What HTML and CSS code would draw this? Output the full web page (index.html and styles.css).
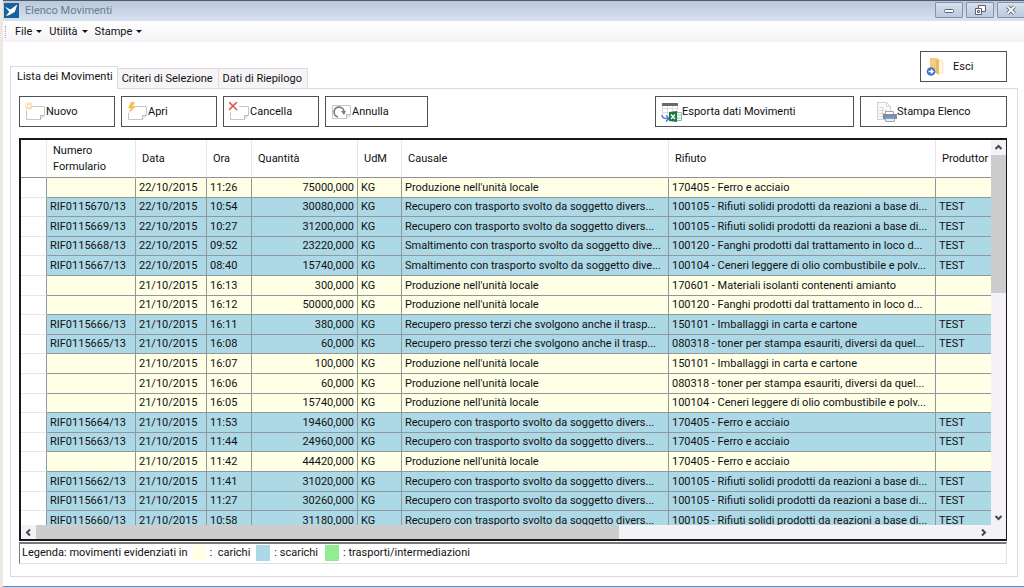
FILE: index.html
```html
<!DOCTYPE html>
<html lang="it">
<head>
<meta charset="utf-8">
<title>Elenco Movimenti</title>
<link rel="stylesheet" href="styles.css">
</head>
<body>
<div class="window">
  <header class="titlebar">
    <svg class="app-icon" viewBox="0 0 14 14" aria-hidden="true"><rect width="14" height="14" fill="#17619f"/><path d="M1 3.5 6 6 12.5 1.5 10 8.5 4.5 11.5 1.5 12 5 8.5Z" fill="#fff"/></svg>
    <h1 class="title">Elenco Movimenti</h1>
    <div class="win-buttons">
      <button class="win-button" type="button" aria-label="Riduci a icona"><svg viewBox="0 0 12 10"><rect x="1.5" y="4.5" width="9" height="3" rx="1" fill="#fff" stroke="#596373"/></svg></button>
      <button class="win-button" type="button" aria-label="Ripristina"><svg viewBox="0 0 12 10"><path d="M4.5.5h7v6h-7z" fill="#fff" stroke="#596373"/><path d="M1.5 3.500h6v6h-6z" fill="#fff" stroke="#596373"/><path d="M3.500 5.500h2v2h-2z" fill="#d5deea" stroke="#596373"/></svg></button>
      <button class="win-button" type="button" aria-label="Chiudi"><svg viewBox="0 0 12 10"><path d="m2.500 1.500 7 7m0-7-7 7" stroke="#596373" stroke-width="3.800"/><path d="m2.500 1.500 7 7m0-7-7 7" stroke="#fff" stroke-width="1.800"/></svg></button>
    </div>
  </header>
  <nav class="menubar">
    <span class="grip"></span>
    <button class="menu" type="button">File</button>
    <button class="menu" type="button">Utilità</button>
    <button class="menu" type="button">Stampe</button>
  </nav>
  <main class="content">
    <div class="top">
      <div class="tabs" role="tablist">
        <button class="tab active" type="button" role="tab" aria-selected="true">Lista dei Movimenti</button>
        <button class="tab" type="button" role="tab" aria-selected="false">Criteri di Selezione</button>
        <button class="tab" type="button" role="tab" aria-selected="false">Dati di Riepilogo</button>
      </div>
      <button class="action exit" type="button">
        <svg class="icon" viewBox="0 0 21 20"><path d="M11 3h5l1 3v10h-6" fill="#fff8e8" stroke="#f7e3bb"/><path d="M4 1h7l2 2v15l-3-2H4z" fill="#f6cb7c"/><path d="m10 4 3-2v16l-3-2z" fill="#ebbb66"/><circle cx="5" cy="14.500" r="4.300" fill="#3d73ce"/><path d="M2.500 14.500h4.500M5 12.500l2 2-2 2" fill="none" stroke="#fff" stroke-width="1.300"/></svg>
        Esci</button>
    </div>
    <section class="panel" role="tabpanel">
      <div class="toolbar">
        <button class="action narrow" type="button">
          <svg class="icon" viewBox="0 0 21 20"><path d="M5 4.500h14.500v9l-4 4h-14V8" fill="none" stroke="#c6c6c6"/><path d="M15.500 17.500v-4h4" fill="#eee" stroke="#bbb"/><path d="M4 0v8M0 4h8M1 1l6 6m0-6L1 7" stroke="#f8d597" stroke-width="1.200"/><circle cx="4" cy="4" r="1.500" fill="#fff"/></svg>Nuovo</button>
        <button class="action narrow" type="button">
          <svg class="icon" viewBox="0 0 21 20"><path d="M7 4.500h12.500v9l-4 4h-14V11" fill="none" stroke="#c6c6c6"/><path d="M15.500 17.500v-4h4" fill="#eee" stroke="#bbb"/><path d="M4 0h4L6 4h3L2 11l1.500-5H1z" fill="#f4bf59"/></svg>Apri</button>
        <button class="action narrow" type="button">
          <svg class="icon" viewBox="0 0 21 20"><path d="M10 4.500h9.500v9l-4 4h-14V10" fill="none" stroke="#c6c6c6"/><path d="M15.500 17.500v-4h4" fill="#eee" stroke="#bbb"/><path d="m0 0 8 8M8 0 0 8" stroke="#e0564a" stroke-width="1.600"/></svg>Cancella</button>
        <button class="action medium" type="button">
          <svg class="icon" viewBox="0 0 21 20"><path d="M1.500 3.500h18v10l-4 3h-14z" fill="none" stroke="#c6c6c6"/><path d="M15.500 16.500v-4h4" fill="#eee" stroke="#bbb"/><path d="M7 15a5 5 0 1 1 6-5" fill="none" stroke="#7c7c7c" stroke-width="1.700"/><path d="m10 9 5 0-2 4z" fill="#7c7c7c"/></svg>Annulla</button>
        <button class="action wide" type="button">
          <svg class="icon" viewBox="0 0 21 20"><path d="M1.500 1.500h15v15h-15zM1 6.500h15M1 10.500h15M6.500 3v13M11.500 3v13" fill="#fff" stroke="#dcdcdc"/><path d="M1 1h16v3H1z" fill="#68696b"/><path d="M0 13h8v6H0z" fill="#fff"/><path d="M1 13q0 4 6 3.500M5 13.500l3 3-3 3" fill="none" stroke="#4d79cf" stroke-width="1.500"/><path d="M15 10.500h5.500v8H15z" fill="#fff" stroke="#8cc4a6"/><path d="M16 13h4m-4 3h4" stroke="#8cc4a6"/><path d="m8 10 8-1v11l-8-1z" fill="#1d7545"/><path d="m10 12.500 4 4.500m0-4.500L10 17" stroke="#fff" stroke-width="1.300"/></svg>Esporta dati Movimenti</button>
        <button class="action print" type="button">
          <svg class="icon" viewBox="0 0 21 20"><path d="M1.500.5h9l4 4v13h-13z" fill="#fafafa" stroke="#d0d0d0"/><path d="M10.500.5v4h4M3 5.500h5M3 8.500h8M3 11.500h6M3 14.500h5M6.500 5v10" fill="none" stroke="#dadada"/><path d="M9.500 9.500h8v4h-8z" fill="#fff" stroke="#a5a5a5"/><path d="M7 12h14v5H7z" fill="#858b95"/><path d="M9 14h10v2H9z" fill="#6a98ce"/><path d="M9.500 16.500h9v3h-9z" fill="#e6edf6" stroke="#96a4b5"/></svg>Stampa Elenco</button>
      </div>
      <div class="grid">
        <div class="viewport">
          <table class="movements">
            <colgroup><col class="c-head"><col class="c-num"><col class="c-date"><col class="c-time"><col class="c-qty"><col class="c-unit"><col class="c-text"><col class="c-text"><col class="c-prod"></colgroup>
            <thead><tr><th></th><th>Numero Formulario</th><th>Data</th><th>Ora</th><th>Quantità</th><th>UdM</th><th>Causale</th><th>Rifiuto</th><th>Produttor</th></tr></thead>
            <tbody>
              <tr class="in"><td></td><td></td><td>22/10/2015</td><td>11:26</td><td>75000,000</td><td>KG</td><td>Produzione nell'unità locale</td><td>170405 - Ferro e acciaio</td><td></td></tr>
              <tr class="out"><td></td><td>RIF0115670/13</td><td>22/10/2015</td><td>10:54</td><td>30080,000</td><td>KG</td><td>Recupero con trasporto svolto da soggetto divers...</td><td>100105 - Rifiuti solidi prodotti da reazioni a base di...</td><td>TEST</td></tr>
              <tr class="out"><td></td><td>RIF0115669/13</td><td>22/10/2015</td><td>10:27</td><td>31200,000</td><td>KG</td><td>Recupero con trasporto svolto da soggetto divers...</td><td>100105 - Rifiuti solidi prodotti da reazioni a base di...</td><td>TEST</td></tr>
              <tr class="out"><td></td><td>RIF0115668/13</td><td>22/10/2015</td><td>09:52</td><td>23220,000</td><td>KG</td><td>Smaltimento con trasporto svolto da soggetto dive...</td><td>100120 - Fanghi prodotti dal trattamento in loco d...</td><td>TEST</td></tr>
              <tr class="out"><td></td><td>RIF0115667/13</td><td>22/10/2015</td><td>08:40</td><td>15740,000</td><td>KG</td><td>Smaltimento con trasporto svolto da soggetto dive...</td><td>100104 - Ceneri leggere di olio combustibile e polv...</td><td>TEST</td></tr>
              <tr class="in"><td></td><td></td><td>21/10/2015</td><td>16:13</td><td>300,000</td><td>KG</td><td>Produzione nell'unità locale</td><td>170601 - Materiali isolanti contenenti amianto</td><td></td></tr>
              <tr class="in"><td></td><td></td><td>21/10/2015</td><td>16:12</td><td>50000,000</td><td>KG</td><td>Produzione nell'unità locale</td><td>100120 - Fanghi prodotti dal trattamento in loco d...</td><td></td></tr>
              <tr class="out"><td></td><td>RIF0115666/13</td><td>21/10/2015</td><td>16:11</td><td>380,000</td><td>KG</td><td>Recupero presso terzi che svolgono anche il trasp...</td><td>150101 - Imballaggi in carta e cartone</td><td>TEST</td></tr>
              <tr class="out"><td></td><td>RIF0115665/13</td><td>21/10/2015</td><td>16:08</td><td>60,000</td><td>KG</td><td>Recupero presso terzi che svolgono anche il trasp...</td><td>080318 - toner per stampa esauriti, diversi da quel...</td><td>TEST</td></tr>
              <tr class="in"><td></td><td></td><td>21/10/2015</td><td>16:07</td><td>100,000</td><td>KG</td><td>Produzione nell'unità locale</td><td>150101 - Imballaggi in carta e cartone</td><td></td></tr>
              <tr class="in"><td></td><td></td><td>21/10/2015</td><td>16:06</td><td>60,000</td><td>KG</td><td>Produzione nell'unità locale</td><td>080318 - toner per stampa esauriti, diversi da quel...</td><td></td></tr>
              <tr class="in"><td></td><td></td><td>21/10/2015</td><td>16:05</td><td>15740,000</td><td>KG</td><td>Produzione nell'unità locale</td><td>100104 - Ceneri leggere di olio combustibile e polv...</td><td></td></tr>
              <tr class="out"><td></td><td>RIF0115664/13</td><td>21/10/2015</td><td>11:53</td><td>19460,000</td><td>KG</td><td>Recupero con trasporto svolto da soggetto divers...</td><td>170405 - Ferro e acciaio</td><td>TEST</td></tr>
              <tr class="out"><td></td><td>RIF0115663/13</td><td>21/10/2015</td><td>11:44</td><td>24960,000</td><td>KG</td><td>Recupero con trasporto svolto da soggetto divers...</td><td>170405 - Ferro e acciaio</td><td>TEST</td></tr>
              <tr class="in"><td></td><td></td><td>21/10/2015</td><td>11:42</td><td>44420,000</td><td>KG</td><td>Produzione nell'unità locale</td><td>170405 - Ferro e acciaio</td><td></td></tr>
              <tr class="out"><td></td><td>RIF0115662/13</td><td>21/10/2015</td><td>11:41</td><td>31020,000</td><td>KG</td><td>Recupero con trasporto svolto da soggetto divers...</td><td>100105 - Rifiuti solidi prodotti da reazioni a base di...</td><td>TEST</td></tr>
              <tr class="out"><td></td><td>RIF0115661/13</td><td>21/10/2015</td><td>11:27</td><td>30260,000</td><td>KG</td><td>Recupero con trasporto svolto da soggetto divers...</td><td>100105 - Rifiuti solidi prodotti da reazioni a base di...</td><td>TEST</td></tr>
              <tr class="out"><td></td><td>RIF0115660/13</td><td>21/10/2015</td><td>10:58</td><td>31180,000</td><td>KG</td><td>Recupero con trasporto svolto da soggetto divers...</td><td>100105 - Rifiuti solidi prodotti da reazioni a base di...</td><td>TEST</td></tr>
            </tbody>
          </table>
        </div>
        <div class="vscroll">
          <svg class="arrow" viewBox="0 0 9 9"><path d="m1.500 6 3-3 3 3"/></svg>
          <div class="track"><div class="thumb"></div></div>
          <svg class="arrow" viewBox="0 0 9 9"><path d="m1.500 3 3 3 3-3"/></svg>
        </div>
        <div class="hscroll">
          <svg class="arrow" viewBox="0 0 9 9"><path d="m6 1.500-3 3 3 3"/></svg>
          <div class="track"><div class="thumb"></div></div>
          <svg class="arrow" viewBox="0 0 9 9"><path d="m3 1.500 3 3-3 3"/></svg>
        </div>
        <div class="corner"></div>
      </div>
      <div class="legend">
        <span>Legenda: movimenti evidenziati in</span>
        <span class="swatch load"></span><span class="load-label">:&nbsp; carichi</span>
        <span class="swatch unload"></span><span>: scarichi</span>
        <span class="swatch transit"></span><span>: trasporti/intermediazioni</span>
      </div>
    </section>
  </main>
</div>
</body>
</html>
```

FILE: styles.css
```css
* { box-sizing: border-box; }
body {
  margin: 0;
  font: 11px/16px Roboto, "Liberation Sans", sans-serif;
  color: #111;
  background: #ebe9e2;
}
button {
  font: inherit;
  color: inherit;
  margin: 0;
  padding: 0;
  border: 0;
  background: none;
  white-space: nowrap;
}
.window {
  display: flex;
  flex-direction: column;
  height: 100vh;
  margin-left: 3px;
  background: #fff;
  border-bottom: 1px solid #2b9af0;
  overflow: hidden;
}
.titlebar {
  display: flex;
  align-items: center;
  height: 21px;
  flex: none;
  border-top: 1px solid #505c6e;
  background: linear-gradient(#bac8db, #d8e2ef);
}
.app-icon { width: 15px; height: 15px; margin: 0 0 2px 1px; }
.title {
  flex: 1;
  margin: 0 0 0 6px;
  font-size: 11px;
  font-weight: normal;
  color: #6b7c92;
}
.win-buttons { display: flex; gap: 3px; height: 16px; margin: 0 -1px 2px 0; }
.win-button {
  display: flex;
  align-items: center;
  justify-content: center;
  width: 28px;
  border: 1px solid #8493aa;
  border-radius: 1px;
  background: linear-gradient(#d6e0ed, #bccade);
}
.win-button svg { width: 12px; height: 10px; }
.menubar {
  display: flex;
  align-items: center;
  height: 21px;
  flex: none;
  gap: 7px;
  background: linear-gradient(#fff, #f5f2f6);
}
.grip { width: 4px; height: 12px; border-left: 1px dotted #aaa; margin-left: 2px; margin-right: -4px; }
.menu { display: flex; align-items: center; gap: 4px; }
.grip + .menu { margin-left: 3px; }
.menu::after {
  content: "";
  border: 3px solid transparent;
  border-top-color: #111;
  border-bottom: 0;
}
.content {
  flex: 1;
  min-height: 0;
  display: flex;
  flex-direction: column;
  padding: 9px 6px 9px 7px;
}
.top { display: flex; justify-content: space-between; height: 37px; flex: none; }
.tabs { display: flex; align-items: flex-end; }
.tab {
  height: 20px;
  padding: 0 5px 0 4px;
  border: 1px solid #dedbe0;
  border-left-width: 0;
  border-bottom: 0;
  background: #f7f4f8;
}
.tab.active {
  height: 23px;
  padding: 0 4px 2px 6px;
  margin-bottom: -1px;
  border-left-width: 1px;
  background: #fff;
  z-index: 1;
}
.action {
  display: flex;
  align-items: center;
  height: 31px;
  padding-left: 5px;
  border: 1px solid #505054;
  background: #fff;
}
.icon { width: 21px; height: 20px; flex: none; }
.exit { width: 87px; margin-right: 11px; gap: 6px; }
.panel {
  flex: 1;
  min-height: 0;
  display: flex;
  flex-direction: column;
  border: 1px solid #dcdade;
  padding: 7px 10px 12px 8px;
}
.toolbar { display: flex; gap: 6px; margin-bottom: 11px; }
.narrow { width: 96px; }
.medium { width: 103px; }
.wide { width: 199px; margin-left: auto; }
.print { width: 147px; padding-left: 15px; }
.grid {
  flex: 1;
  min-height: 0;
  display: grid;
  grid-template: minmax(0, 1fr) 14px / minmax(0, 1fr) 15px;
  border: 2px solid #18181a;
  border-right-width: 1px;
}
.viewport { overflow: hidden; }
.movements {
  table-layout: fixed;
  width: 1059px;
  border-collapse: separate;
  border-spacing: 0;
}
.c-head { width: 26px; }
.c-num { width: 89px; }
.c-date { width: 71px; }
.c-time { width: 45px; }
.c-qty { width: 106px; }
.c-unit { width: 44px; }
.c-text { width: 267px; }
.c-prod { width: 144px; }
th {
  height: 38px;
  padding: 0 6px;
  font-weight: normal;
  text-align: left;
  border-right: 1px solid #e8e6ea;
  border-bottom: 1px solid #8e9294;
}
td {
  height: 20px;
  padding: 0 3px;
  line-height: 16px;
  white-space: nowrap;
  overflow: hidden;
  border-right: 1px solid #8f989c;
  border-bottom: 1px solid #8f989c;
}
tr:nth-child(5n+2) td, tr:nth-child(5n+4) td { height: 19px; }
td:first-child { border-bottom-color: #e8e6ea; }
td:nth-child(5) { text-align: right; }
.in td { background: #ffffe6; }
.out td { background: #add8e6; }
.in td:first-child, .out td:first-child { background: #fff; }
.vscroll, .hscroll { display: flex; align-items: center; background: #f5f2f7; }
.vscroll { flex-direction: column; }
.arrow { width: 9px; height: 9px; margin: 3px; flex: none; fill: none; stroke: #48484c; stroke-width: 2; }
.track { flex: 1; align-self: stretch; }
.thumb { background: #cdcdcd; }
.vscroll .thumb { height: 39%; }
.hscroll .thumb { width: 62%; height: 100%; }
.corner { background: #f5f2f7; }
.legend {
  display: flex;
  align-items: center;
  height: 22px;
  flex: none;
  margin-top: 1px;
  padding: 0 0 1px 2px;
  gap: 4px;
  white-space: nowrap;
  border: 1px solid #e2e0e4;
  border-top: 2px solid #77777b;
  border-left-color: #77777b;
}
.swatch { width: 14px; height: 16px; }
.load { background: #ffffe6; }
.load-label { margin-right: 2px; }
.unload { background: #add8e6; }
.transit { background: #90ee90; margin-left: 3px; }
```
